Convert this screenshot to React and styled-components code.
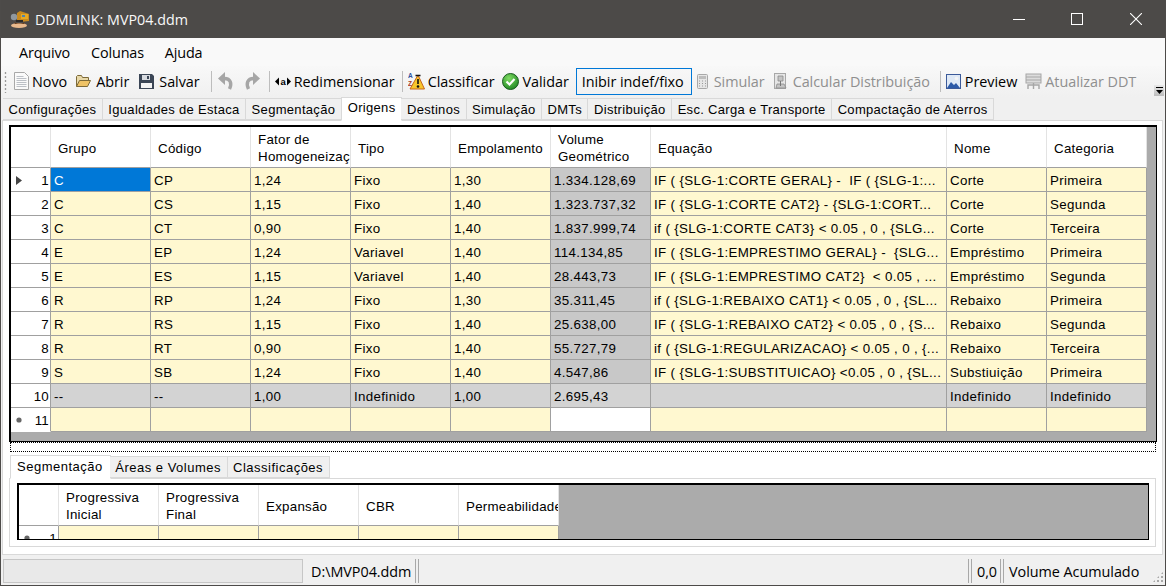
import React from "react";
import styled, { createGlobalStyle } from "styled-components";

const GlobalStyle = createGlobalStyle`
  html, body { margin: 0; padding: 0; background: #f0f0f0; overflow: hidden; }
  * { box-sizing: border-box; }
`;

const tabs = ["Configurações", "Igualdades de Estaca", "Segmentação", "Origens", "Destinos", "Simulação", "DMTs", "Distribuição", "Esc. Carga e Transporte", "Compactação de Aterros"];

const origens = [
  ["C", "CP", "1,24", "Fixo", "1,30", "1.334.128,69", "IF ( {SLG-1:CORTE GERAL} -  IF ( {SLG-1:...", "Corte", "Primeira"],
  ["C", "CS", "1,15", "Fixo", "1,40", "1.323.737,32", "IF ( {SLG-1:CORTE CAT2} - {SLG-1:CORT...", "Corte", "Segunda"],
  ["C", "CT", "0,90", "Fixo", "1,40", "1.837.999,74", "if ( {SLG-1:CORTE CAT3} < 0.05 , 0 , {SLG...", "Corte", "Terceira"],
  ["E", "EP", "1,24", "Variavel", "1,40", "114.134,85", "IF ( {SLG-1:EMPRESTIMO GERAL} -  {SLG...", "Empréstimo", "Primeira"],
  ["E", "ES", "1,15", "Variavel", "1,40", "28.443,73", "IF ( {SLG-1:EMPRESTIMO CAT2}  < 0.05 , ...", "Empréstimo", "Segunda"],
  ["R", "RP", "1,24", "Fixo", "1,30", "35.311,45", "if ( {SLG-1:REBAIXO CAT1} < 0.05 , 0 , {SL...", "Rebaixo", "Primeira"],
  ["R", "RS", "1,15", "Fixo", "1,40", "25.638,00", "IF ( {SLG-1:REBAIXO CAT2} < 0.05 , 0 , {S...", "Rebaixo", "Segunda"],
  ["R", "RT", "0,90", "Fixo", "1,40", "55.727,79", "if ( {SLG-1:REGULARIZACAO} < 0.05 , 0 , {...", "Rebaixo", "Terceira"],
  ["S", "SB", "1,24", "Fixo", "1,40", "4.547,86", "IF ( {SLG-1:SUBSTITUICAO} <0.05 , 0 , {SL...", "Substiuição", "Primeira"],
  ["--", "--", "1,00", "Indefinido", "1,00", "2.695,43", "", "Indefinido", "Indefinido"],
];

const heads = ["Grupo", "Código", "Fator de\nHomogeneizaç", "Tipo", "Empolamento", "Volume\nGeométrico", "Equação", "Nome", "Categoria"];
const lowerHeads = ["Progressiva\nInicial", "Progressiva\nFinal", "Expansão", "CBR", "Permeabilidade"];

const Window = styled.div`
  width: 1166px;
  height: 586px;
  display: flex;
  flex-direction: column;
  background: #f0f0f0;
  border: 1px solid #4d4b49;
  border-top: 0;
  overflow: hidden;
  font-family: "Liberation Sans", Arial, sans-serif;
  color: #000;
`;

const TitleBar = styled.div`
  height: 38px;
  flex: none;
  display: flex;
  align-items: center;
  background: #4c4a48;
  color: #fff;
`;

const TitleText = styled.span`
  font: 14.3px "Open Sans", sans-serif;
  margin-left: 5px;
  flex: 1;
  color: #f8f8f8;
`;

const WinButton = styled.div`
  width: 58.5px;
  height: 38px;
  display: flex;
  align-items: center;
  justify-content: center;
`;

const MenuBar = styled.div`
  height: 28px;
  flex: none;
  display: flex;
  align-items: center;
  background: #f9f9f9;
  padding: 0 0 0 18px;
  gap: 21px;
`;

const MenuItem = styled.span`
  font: 14.4px "Open Sans", sans-serif;
  letter-spacing: -0.15px;
`;

const ToolBar = styled.div`
  height: 31px;
  flex: none;
  display: flex;
  align-items: center;
  background: linear-gradient(#f8f8f8, #f0f0f0);
  padding: 0 0 0 3px;
  position: relative;
`;

const Grip = styled.div`
  width: 3px;
  height: 22px;
  margin-right: 7px;
  background-image: radial-gradient(#9a9a9a 0.9px, transparent 1.1px);
  background-size: 3px 4px;
`;

const Tool = styled.div`
  display: flex;
  align-items: center;
  gap: ${(p) => p.$gap ?? 3}px;
  height: 24px;
  padding-bottom: 1px;
  margin-right: ${(p) => p.$mr ?? 9}px;
  font: 14.4px "Open Sans", sans-serif;
  letter-spacing: -0.04px;
  white-space: nowrap;
  color: ${(p) => (p.$off ? "#8f8f8f" : "#000")};
`;

const BoxedTool = styled(Tool)`
  border: 1px solid #0078d7;
  padding: 0 5px 1px;
  width: 116px;
  height: 27px;
  margin: 0 5px 0 -2px;
`;

const Sep = styled.div`
  width: 1px;
  height: 21px;
  background: #bdbdbd;
  margin: 0 5px 0 2px;
`;

const Overflow = styled.div`
  position: absolute;
  right: 1px;
  bottom: 1px;
  width: 10px;
  height: 11px;
  background: linear-gradient(#e8e8e8, #bdbdbd);
  display: flex;
  justify-content: center;
  padding-top: 2px;
`;

const TabRow = styled.div`
  display: flex;
  align-items: flex-end;
  height: ${(p) => p.$h}px;
  flex: none;
  padding-left: ${(p) => p.$left}px;
  position: relative;
  z-index: 1;
`;

const Tab = styled.div`
  height: ${(p) => (p.$on ? "24px" : "22px")};
  margin: 0 ${(p) => (p.$on ? "-1px" : "0")} ${(p) => (p.$on ? "-1px" : "0")};
  padding: ${(p) => (p.$on ? "0 6px 3px" : "0 5.5px")};
  display: flex;
  align-items: center;
  font-size: 13px;
  letter-spacing: 0.31px;
  background: ${(p) => (p.$on ? "#fff" : "#f0f0f0")};
  border: 1px solid #d9d9d9;
  border-left-width: ${(p) => (p.$on ? "1px" : "0")};
  border-bottom-color: ${(p) => (p.$on ? "#fff" : "#d9d9d9")};
  white-space: nowrap;
`;

const LowerTab = styled(Tab)`
  padding-bottom: ${(p) => (p.$on ? "1px" : "0")};
  padding-right: ${(p) => (p.$on ? "7px" : "5.5px")};
  letter-spacing: 0.5px;
`;

const Panel = styled.div`
  background: #fff;
  border: 1px solid #d9d9d9;
  margin: 0 2px 0 1px;
  padding: 4px 5px 0 6px;
  height: 435px;
  flex: none;
`;

const GridBox = styled.div`
  border: 1px solid #000;
  background: #ababab;
  border-top-width: 2px;
  border-left-width: 2px;
  overflow: hidden;
  height: ${(p) => p.$h}px;
`;

const Row = styled.div`
  display: grid;
  grid-template-columns: ${(p) => p.$cols};
  height: ${(p) => p.$h}px;
`;

const HeadCell = styled.div`
  background: #fff;
  border-right: 1px solid #e3e3e3;
  border-bottom: 1px solid #a0a0a0;
  display: flex;
  align-items: center;
  padding: 2px 0 0 7px;
  font-size: 13.33px;
  line-height: 17px;
  letter-spacing: 0.25px;
  white-space: pre;
  overflow: hidden;
`;

const RowHead = styled.div`
  background: #fff;
  border-right: 1px solid #a0a0a0;
  border-bottom: 1px solid ${(p) => (p.$last ? "#fff" : "#a0a0a0")};
  display: flex;
  align-items: center;
  justify-content: space-between;
  padding: 1px 1px 0 5px;
  font-size: 13.33px;
  letter-spacing: 0.25px;
`;

const RowMark = styled.span`
  width: 6px;
  display: flex;
`;

const Cell = styled.div`
  background: ${(p) => p.$bg};
  color: ${(p) => p.$fg || "#000"};
  border-right: 1px solid #a0a0a0;
  border-bottom: 1px solid #a0a0a0;
  display: flex;
  align-items: center;
  padding: 1px 0 0 3px;
  font-size: 13.33px;
  letter-spacing: 0.34px;
  white-space: pre;
  overflow: hidden;
`;

const Splitter = styled.div`
  height: 10px;
  flex: none;
  margin: 0 1px;
  border: 1px dotted #000;
`;

const LowerTabs = styled(TabRow)`
  margin-top: 1px;
`;

const LowerPanel = styled.div`
  border: 1px solid #d9d9d9;
  margin: 0 1px 0 0;
  padding: 4px 6px 6px 7px;
  height: 69px;
`;

const StatusBar = styled.div`
  flex: 1;
  display: flex;
  align-items: center;
  padding: 2px 0 0 2px;
  position: relative;
  background: #f0f0f0;
`;

const StatusPanel = styled.div`
  height: 24px;
  display: flex;
  align-items: center;
  padding-top: 1px;
  font: 14.4px "Open Sans", sans-serif;
  letter-spacing: -0.04px;
  white-space: nowrap;
  padding-left: ${(p) => p.$pad || 0}px;
  width: ${(p) => p.$w}px;
  flex: ${(p) => (p.$grow ? 1 : "none")};
`;

const StatusInset = styled(StatusPanel)`
  border: 1px solid #c6c6c6;
  background: #e9e9e9;
`;

const StatusSep = styled.div`
  width: 4px;
  height: 24px;
  flex: none;
  border-left: 1px solid #a8a8a8;
  border-right: 1px solid #a8a8a8;
`;

const ResizeGrip = styled.div`
  position: absolute;
  right: 1px;
  bottom: 2px;
  width: 12px;
  height: 12px;
  background-image: radial-gradient(#a8a8a8 1px, transparent 1.2px);
  background-size: 4px 4px;
  clip-path: polygon(100% 0, 100% 100%, 0 100%);
`;

const Logo = () => (
  <svg width="21" height="20" viewBox="0 0 21 20" style={{ marginLeft: 8 }}>
    <ellipse cx="10" cy="16.5" rx="8" ry="2.6" fill="#e9b98c" />
    <path d="M5 13c3 2 8 2 11 0l-1 2H6z" fill="#6b3f1c" />
    <path d="M8 4l3-2 9 3v7l-9 1-3-2z" fill="#c98a1e" />
    <rect x="12" y="5" width="7" height="5" fill="#e8a923" />
    <rect x="13" y="6" width="3" height="2" fill="#4f84b0" />
    <circle cx="5" cy="8" r="3.2" fill="#8f979e" />
    <path d="M7 11h7v2H7z" fill="#2c2a28" />
  </svg>
);

const NewIcon = () => (
  <svg width="15" height="18" viewBox="0 0 15 18">
    <path d="M.5.5h10l4 4v13H.5z" fill="#fafafa" stroke="#a8a8a8" />
    <path d="M2.5 4.5h7M2.5 6.5h10M2.5 8.5h10M2.5 10.5h10M2.5 12.5h10M2.5 14.5h10" stroke="#bcc0c6" />
  </svg>
);
const OpenIcon = () => (
  <svg width="15" height="14" viewBox="0 0 15 14">
    <path d="M.5 12.5v-10l1-1h4l1 2h6v3" fill="#e8d8a8" stroke="#7d6a38" />
    <path d="M.5 12.5l3-6h11l-3 6z" fill="#efc366" stroke="#7d6a38" />
  </svg>
);
const SaveIcon = () => (
  <svg width="15" height="15" viewBox="0 0 15 15">
    <path d="M0 0h13l2 2v13H0z" fill="#3b4656" />
    <rect x="3" y="1" width="8" height="5" fill="#d8dbe0" />
    <rect x="2" y="9" width="11" height="5" fill="#f4f4f4" />
    <rect x="8" y="2" width="2" height="3" fill="#3b4656" />
  </svg>
);
const UndoIcon = ({ flip }) => (
  <svg width="17" height="18" viewBox="0 0 17 18" style={{ transform: flip ? "scaleX(-1)" : "none" }}>
    <path d="M12.5 17c2.5-5 1.5-11-6-10.5" fill="none" stroke="#a6a6a6" strokeWidth="3.4" />
    <path d="M8 0L1 6.5 8 13z" fill="#a6a6a6" />
  </svg>
);
const ResizeIcon = () => (
  <svg width="16" height="11" viewBox="0 0 16 11">
    <path d="M0 5.5l4-4v8zM16 5.5l-4-4v8z" fill="#000" />
    <text x="8" y="8.6" textAnchor="middle" fontFamily="Liberation Sans" fontSize="9.5" fontWeight="700">a</text>
  </svg>
);
const SortIcon = () => (
  <svg width="17" height="19" viewBox="0 0 17 19">
    <path d="M10 3l6.5 14H2z" fill="#f8c62c" stroke="#c8641a" />
    <path d="M7.5 3.5h5M10 7v5" stroke="#111" strokeWidth="1.6" />
    <circle cx="10" cy="14.5" r="1.3" fill="#111" />
    <text x="0" y="6" fontFamily="Liberation Sans" fontSize="6.5" fontWeight="700" fill="#2a4f9e">A</text>
    <text x="0" y="13.5" fontFamily="Liberation Sans" fontSize="6.5" fontWeight="700" fill="#a83a22">Z</text>
  </svg>
);
const CheckIcon = () => (
  <svg width="17" height="17" viewBox="0 0 17 17">
    <defs>
      <radialGradient id="okFill" cx="0.4" cy="0.3" r="0.8">
        <stop offset="0" stopColor="#7fdc63" />
        <stop offset="1" stopColor="#17801d" />
      </radialGradient>
    </defs>
    <circle cx="8.5" cy="8.5" r="8" fill="url(#okFill)" stroke="#195a1e" />
    <path d="M4.5 8.5l3 3 5-5.5" fill="none" stroke="#fff" strokeWidth="2.2" />
  </svg>
);
const CalcIcon = () => (
  <svg width="11" height="15" viewBox="0 0 11 15">
    <rect x=".5" y=".5" width="10" height="14" rx="1" fill="#e6e6e6" stroke="#a8a8a8" />
    <rect x="2" y="2" width="7" height="3" fill="#bdbdbd" />
    <path d="M2 7h1M5 7h1M8 7h1M2 9.5h1M5 9.5h1M8 9.5h1M2 12h1M5 12h1M8 12h1" stroke="#999" />
  </svg>
);
const DistIcon = () => (
  <svg width="13" height="16" viewBox="0 0 13 16">
    <rect x=".5" y=".5" width="11" height="15" fill="#e6e6e6" stroke="#a8a8a8" />
    <path d="M4 3h5v5H4zM3 11h7l2 4H2z" fill="#c4c4c4" stroke="#8c8c8c" strokeWidth=".8" />
    <path d="M6.5 8v5" stroke="#777" />
  </svg>
);
const PreviewIcon = () => (
  <svg width="15" height="15" viewBox="0 0 15 15">
    <rect x=".5" y=".5" width="14" height="14" fill="#dfe9f6" stroke="#3b5a9a" />
    <path d="M1 14l4-6 3 3 2-2 4 5z" fill="#2c5aa8" />
    <circle cx="10.5" cy="4.5" r="1.8" fill="#f5f5f5" />
  </svg>
);
const DdtIcon = () => (
  <svg width="17" height="17" viewBox="0 0 17 17">
    <rect x="1" y="1" width="15" height="9" fill="#dcdcdc" stroke="#a6a6a6" />
    <path d="M1 4h15M1 7h15" stroke="#a6a6a6" />
    <path d="M3 16v-4h11v4M8.5 10v6" fill="none" stroke="#a6a6a6" strokeWidth="1.4" />
  </svg>
);
const MinIcon = () => (
  <svg width="12" height="12" viewBox="0 0 12 12" shapeRendering="crispEdges"><path d="M0 6.5h12" stroke="#fff" /></svg>
);
const MaxIcon = () => (
  <svg width="12" height="12" viewBox="0 0 12 12" shapeRendering="crispEdges"><rect x=".5" y=".5" width="11" height="11" fill="none" stroke="#fff" /></svg>
);
const CloseIcon = () => (
  <svg width="12" height="12" viewBox="0 0 12 12"><path d="M0 0l12 12M12 0L0 12" stroke="#fff" strokeWidth="1.1" /></svg>
);
const OverflowIcon = () => (
  <svg width="7" height="7" viewBox="0 0 7 7"><path d="M0 0h7v1H0zM0 3h7L3.5 7z" fill="#000" /></svg>
);
const Arrow = () => (
  <svg width="6" height="9" viewBox="0 0 6 9"><path d="M0 0l6 4.5L0 9z" fill="#444" /></svg>
);
const Dot = () => (
  <svg width="6" height="6" viewBox="0 0 6 6"><circle cx="3" cy="3" r="2.6" fill="#666" /></svg>
);

const mainCols = "40px 100px 100px 100px 100px 100px 100px 296px 100px 100px";
const lowerCols = "40px 100px 100px 100px 100px 100px";

function cellColors(row, col) {
  if (row === 0 && col === 0) return { $bg: "#0078d7", $fg: "#fff" };
  if (row === 9) return { $bg: "#d3d3d3" };
  if (col === 5) return { $bg: row === 10 ? "#fff" : "#c8c8c8" };
  return { $bg: "#fff8d0" };
}

export default function App() {
  return (
    <Window>
      <GlobalStyle />
      <TitleBar>
        <Logo />
        <TitleText>DDMLINK: MVP04.ddm</TitleText>
        <WinButton><MinIcon /></WinButton>
        <WinButton><MaxIcon /></WinButton>
        <WinButton><CloseIcon /></WinButton>
      </TitleBar>
      <MenuBar>
        <MenuItem>Arquivo</MenuItem>
        <MenuItem>Colunas</MenuItem>
        <MenuItem>Ajuda</MenuItem>
      </MenuBar>
      <ToolBar>
        <Grip />
        <Tool><NewIcon />Novo</Tool>
        <Tool $gap={5} $mr={10}><OpenIcon />Abrir</Tool>
        <Tool $gap={5} $mr={9}><SaveIcon />Salvar</Tool>
        <Sep />
        <Tool $gap={10} $mr={6}><UndoIcon /><UndoIcon flip /></Tool>
        <Sep />
        <Tool $gap={3} $mr={5}><ResizeIcon />Redimensionar</Tool>
        <Sep />
        <Tool $mr={8}><SortIcon />Classificar</Tool>
        <Tool><CheckIcon />Validar</Tool>
        <BoxedTool>Inibir indef/fixo</BoxedTool>
        <Tool $off $gap={6} $mr={9}><CalcIcon />Simular</Tool>
        <Tool $off $gap={6} $mr={8}><DistIcon />Calcular Distribuição</Tool>
        <Sep />
        <Tool $gap={4} $mr={8}><PreviewIcon />Preview</Tool>
        <Tool $off><DdtIcon />Atualizar DDT</Tool>
        <Overflow><OverflowIcon /></Overflow>
      </ToolBar>
      <TabRow $h={23} $left={2}>
        {tabs.map((t) => <Tab key={t} $on={t === "Origens"}>{t}</Tab>)}
      </TabRow>
      <Panel>
        <GridBox $h={317}>
          <Row $cols={mainCols} $h={41}>
            <HeadCell />
            {heads.map((h) => <HeadCell key={h}>{h}</HeadCell>)}
          </Row>
          {[...origens, Array(9).fill("")].map((r, i) => (
            <Row key={i} $cols={mainCols} $h={24}>
              <RowHead $last={i === 10}>
                <RowMark>{i === 0 ? <Arrow /> : i === 10 ? <Dot /> : null}</RowMark>
                {i + 1}
              </RowHead>
              {r.map((c, j) => <Cell key={j} {...cellColors(i, j)}>{c}</Cell>)}
            </Row>
          ))}
        </GridBox>
        <Splitter />
        <LowerTabs $h={25} $left={2}>
          <LowerTab $on>Segmentação</LowerTab>
          <LowerTab>Áreas e Volumes</LowerTab>
          <LowerTab>Classificações</LowerTab>
        </LowerTabs>
        <LowerPanel>
          <GridBox $h={57}>
            <Row $cols={lowerCols} $h={41}>
              <HeadCell />
              {lowerHeads.map((h) => <HeadCell key={h}>{h}</HeadCell>)}
            </Row>
            <Row $cols={lowerCols} $h={24}>
              <RowHead><Dot />1</RowHead>
              {lowerHeads.map((h) => <Cell key={h} $bg="#fff8d0" />)}
            </Row>
          </GridBox>
        </LowerPanel>
      </Panel>
      <StatusBar>
        <StatusInset $w={300} />
        <StatusPanel $w={112} $pad={8}>D:\MVP04.ddm</StatusPanel>
        <StatusSep />
        <StatusPanel $grow />
        <StatusSep />
        <StatusPanel $w={28} $pad={5}>0,0</StatusPanel>
        <StatusSep />
        <StatusPanel $w={161} $pad={5}>Volume Acumulado</StatusPanel>
        <ResizeGrip />
      </StatusBar>
    </Window>
  );
}
